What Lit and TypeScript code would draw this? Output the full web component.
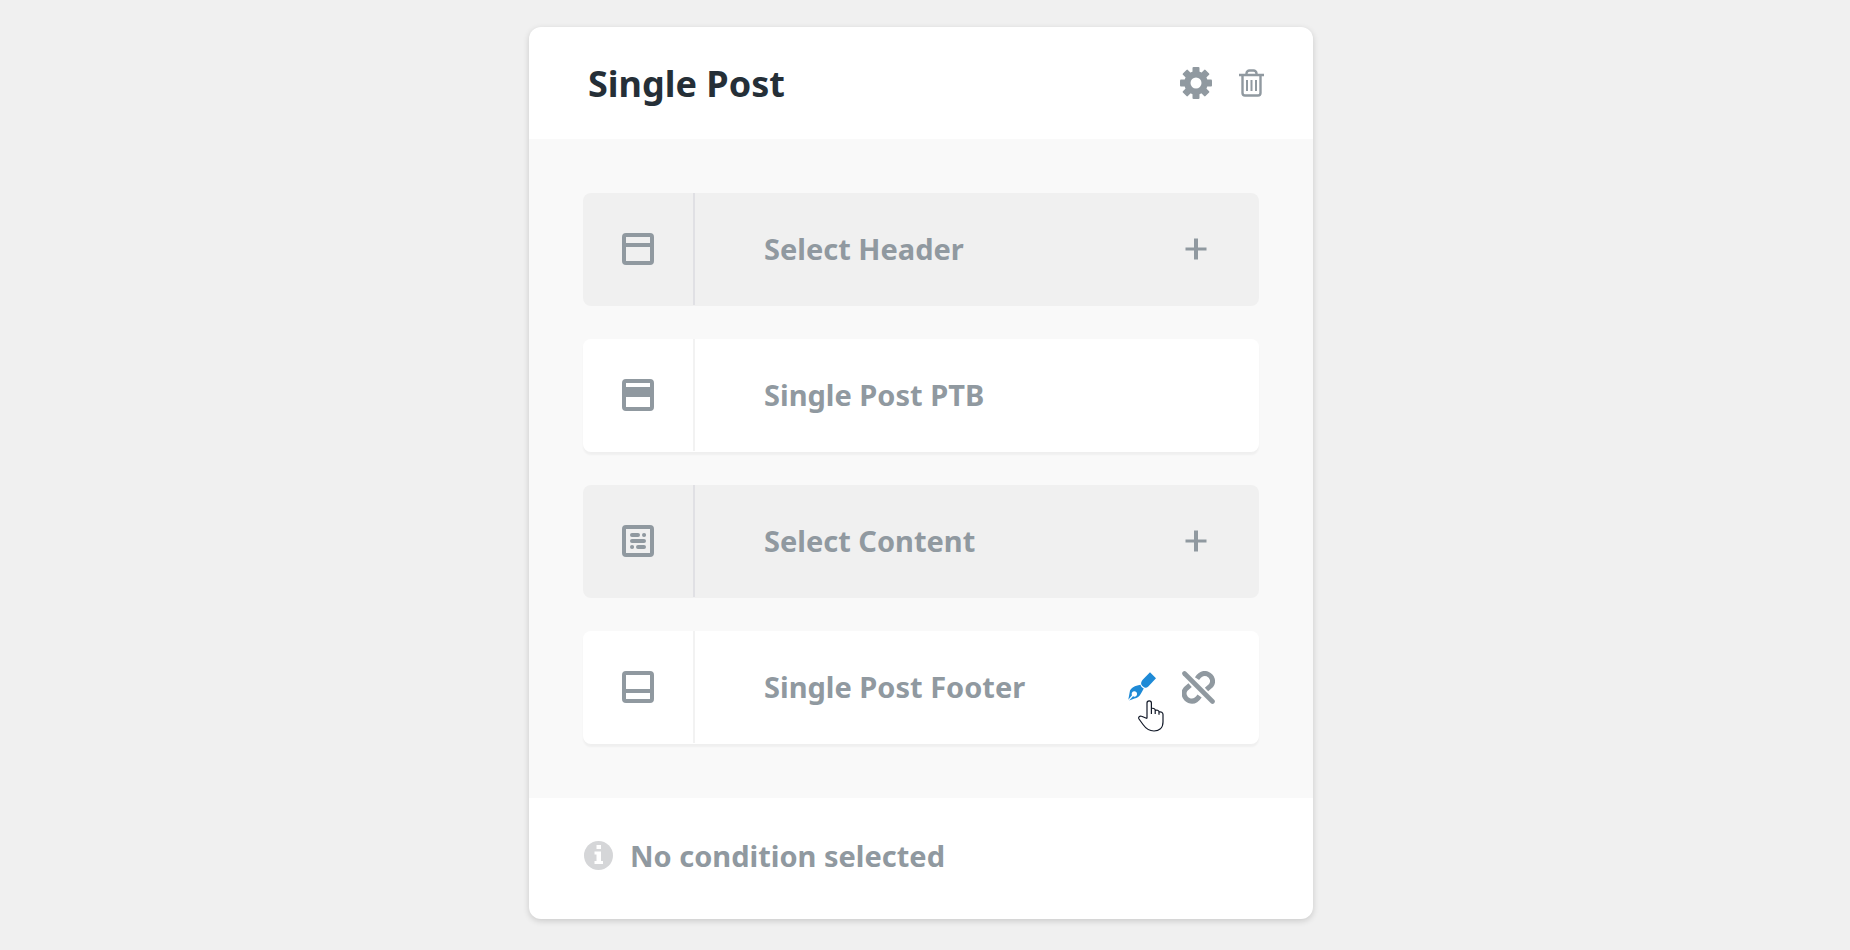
import { LitElement, html, svg, css, nothing, type TemplateResult } from "lit";
import { customElement, property } from "lit/decorators.js";

const frame = svg`<rect x="2" y="2" width="28" height="28" rx="2" fill="none" stroke="currentColor" stroke-width="4"/>`;

const areaIcons: Record<string, TemplateResult> = {
  header: svg`${frame}<path d="M4 10h24v4H4z"/>`,
  title: svg`${frame}<path d="M4 8h24v10H4z"/>`,
  content: svg`${frame}<path fill="none" stroke="currentColor" stroke-width="4" stroke-linecap="round" d="M10 10h6M22 10h.1M10 16h12M10 22h.1M16 22h6"/>`,
  footer: svg`${frame}<path d="M4 18h24v4H4z"/>`,
};

const teeth = [0, 45, 90, 135].map(
  (angle) => svg`<rect x="12.500" y="0" width="7" height="32" rx="1" transform="rotate(${angle} 16 16)"/>`
);

@customElement("template-area")
export class TemplateArea extends LitElement {
  @property() label = "";
  @property() icon = "header";
  @property({ type: Boolean }) filled = false;
  @property({ type: Boolean }) active = false;

  static styles = css`
    :host {
      display: block;
    }
    .area {
      display: flex;
      min-height: 112px;
      padding-bottom: 1px;
      border-radius: 8px;
      background: #f0f0f0;
      color: #9099a0;
    }
    .filled {
      background: #fff;
      box-shadow: 0 3px 2px rgba(0, 0, 0, 0.04);
    }
    .kind {
      display: grid;
      place-items: center;
      width: 110px;
      border-right: 2px solid #e0e0e4;
    }
    .filled .kind {
      border-color: #f2f2f2;
    }
    .main {
      flex: 1;
      display: flex;
      align-items: center;
      justify-content: space-between;
      padding: 0 44px 0 69px;
    }
    .name {
      font-size: 29px;
      line-height: 40px;
      font-weight: 700;
    }
    .actions {
      display: flex;
      align-items: center;
      gap: 24px;
    }
    button {
      display: block;
      padding: 0;
      border: 0;
      background: none;
      color: inherit;
      cursor: pointer;
    }
    svg {
      display: block;
      fill: currentColor;
    }
    .edit {
      position: relative;
      color: #1e8ad6;
    }
    .pointer {
      position: absolute;
      left: 10px;
      top: 28px;
    }
  `;

  render() {
    return html`
      <div class="area ${this.filled ? "filled" : ""}">
        <div class="kind">
          <svg width="32" height="32" viewBox="0 0 32 32" aria-hidden="true">${areaIcons[this.icon]}</svg>
        </div>
        <div class="main">
          <span class="name">${this.label}</span>
          <div class="actions">${this.renderActions()}</div>
        </div>
      </div>
    `;
  }

  private renderActions() {
    if (!this.filled) {
      return html`<button type="button" aria-label="Add ${this.label}">
        <svg width="38" height="38" viewBox="0 0 38 38"><path d="M17 8.500h4v9h8.500v3H21v9h-4v-9H8.500v-3H17z"/></svg>
      </button>`;
    }
    if (!this.active) return nothing;
    return html`
      <button class="edit" type="button" aria-label="Edit ${this.label}">
        <svg width="30" height="32" viewBox="0 0 30 32">
          <path d="M22 1.300 28 7.300 20.300 15.500C18.500 17 16.800 17 15.300 15.800 13.500 14.500 12.800 13 13.200 11.500 13.500 10.300 14 9.500 14.700 8.800z"/>
          <path fill-rule="evenodd" d="M9.300 14.500 12.500 13.800C13 15.500 14 16.800 15.800 17.600L13 22.500C11.500 25.500 9 27 6.500 27.600L1.200 29.600 5 25.300A2.700 2.700 0 1 0 4 24.300L.3 28.700 2 19.500C2.800 17.500 6 15.300 9.300 14.500z"/>
        </svg>
        <svg class="pointer" width="26" height="34" viewBox="0 0 26 34" aria-hidden="true">
          <path fill="#fff" stroke="#111827" stroke-width="1.200" stroke-linejoin="round" d="M9 19.500V4a2.200 2.200 0 0 1 4.400 0v10M13.400 15v-5.500c1.500-.6 3.500 0 3.800 1.500v4M17.200 11.500c1.500-.8 3.500-.2 3.800 1.200v3M21 13c2-.6 4 .5 4 2.500V23c0 6-4 9-9 9-5.500 0-8.500-3-11-6.500L1 20c-1-2 .8-3.500 2.600-2.700L9 19.500"/>
        </svg>
      </button>
      <button type="button" aria-label="Unlink ${this.label}">
        <svg width="33" height="33" viewBox="0 0 33 33">
          <g fill="none" stroke="currentColor" stroke-width="5" stroke-linecap="round">
            <path stroke-linecap="butt" d="M15 7.600C17.800 3.400 21.800 1.600 25.500 3 30.500 5 32 11 29 14.500L24.500 18.500M17.600 25C14.800 29.200 10.800 31 7.100 29.600 2.100 27.600.6 21.600 3.600 18.100L8.100 14.100"/>
            <path stroke-width="4.600" d="M2.500 2.500l28 28"/>
          </g>
        </svg>
      </button>
    `;
  }
}

@customElement("app-root")
export class AppRoot extends LitElement {
  static styles = css`
    :host {
      display: flex;
      justify-content: center;
      box-sizing: border-box;
      min-height: 100vh;
      padding: 27px 24px 24px 16px;
      background: #f0f0f0;
      color: #9099a0;
      font-family: "Noto Sans", sans-serif;
    }
    .card {
      width: 100%;
      max-width: 784px;
      align-self: flex-start;
      border-radius: 12px;
      overflow: hidden;
      background: #fff;
      box-shadow: 0 2px 6px rgba(0, 0, 0, 0.16);
    }
    .top {
      display: flex;
      align-items: center;
      justify-content: space-between;
      min-height: 112px;
      padding: 0 49px 0 59px;
    }
    h1 {
      margin: 0;
      padding-top: 2px;
      color: #252f37;
      font-size: 36px;
      line-height: 48px;
      font-weight: 700;
    }
    .tools {
      display: flex;
      align-items: center;
      gap: 27px;
    }
    button {
      display: block;
      padding: 0;
      border: 0;
      background: none;
      color: inherit;
      cursor: pointer;
    }
    svg {
      display: block;
      fill: currentColor;
    }
    .areas {
      display: grid;
      gap: 33px;
      padding: 54px;
      background: #f9f9f9;
    }
    .conditions {
      display: flex;
      align-items: center;
      gap: 17px;
      min-height: 121px;
      box-sizing: border-box;
      padding: 0 55px 6px;
      font-size: 29px;
      line-height: 40px;
      font-weight: 700;
    }
    .info {
      color: #d5d6d8;
    }
  `;

  render() {
    return html`
      <section class="card">
        <header class="top">
          <h1>Single Post</h1>
          <div class="tools">
            <button type="button" aria-label="Settings">
              <svg width="32" height="32" viewBox="0 0 32 32">
                ${teeth}
                <circle cx="16" cy="16" r="8.500" fill="none" stroke="currentColor" stroke-width="6.500"/>
                <circle cx="16" cy="16" r="5.500" fill="#fff"/>
              </svg>
            </button>
            <button type="button" aria-label="Delete">
              <svg width="25" height="28" viewBox="0 0 25 28">
                <g fill="none" stroke="currentColor" stroke-width="2.400">
                  <path d="M0 6h25M7.500 6V4.500a3 3 0 0 1 3-3h4a3 3 0 0 1 3 3V6M3.500 6v18a2.500 2.500 0 0 0 2.500 2.500h13a2.500 2.500 0 0 0 2.500-2.500V6"/>
                  <path stroke-width="2" d="M8 11v11M12.500 11v11M17 11v11"/>
                </g>
              </svg>
            </button>
          </div>
        </header>
        <div class="areas">
          <template-area label="Select Header" icon="header"></template-area>
          <template-area label="Single Post PTB" icon="title" filled></template-area>
          <template-area label="Select Content" icon="content"></template-area>
          <template-area label="Single Post Footer" icon="footer" filled active></template-area>
        </div>
        <footer class="conditions">
          <svg class="info" width="29" height="29" viewBox="0 0 29 29" aria-hidden="true">
            <circle cx="14.500" cy="14.500" r="14.500"/>
            <path fill="#fff" d="M12.500 4h4.500v4h-4.500zM10.500 10.500H17V20h2v3h-8.500v-3h2v-6.500h-2z"/>
          </svg>
          <span>No condition selected</span>
        </footer>
      </section>
    `;
  }
}
